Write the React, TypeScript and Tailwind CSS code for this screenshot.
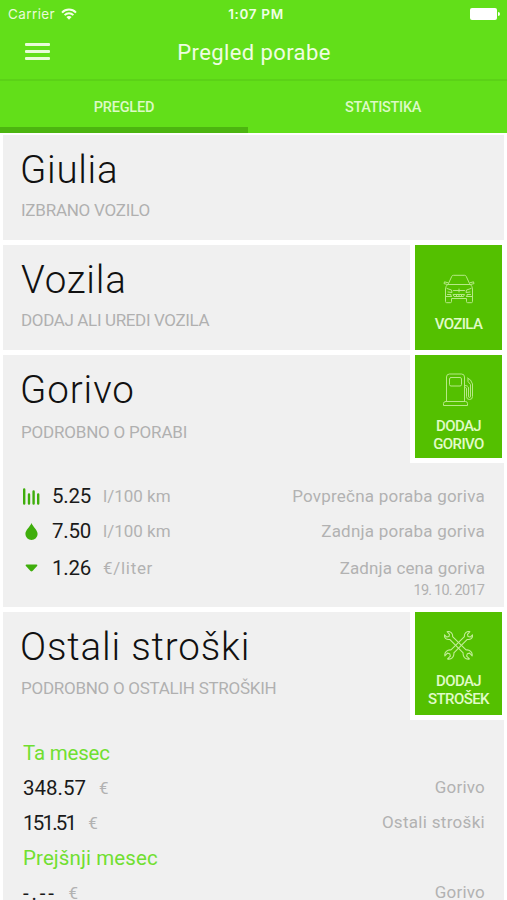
import type { ReactNode } from "react";

function StatusBar() {
  return (
    <div className="flex h-7 items-center pl-[8px] pr-[7px] font-['Inter',sans-serif] text-[13.5px] text-[#e9fbd9]">
      <div className="flex flex-1 items-center gap-[6px]">
        <span className="tracking-[0.4px]">Carrier</span>
        <svg width="16" height="12" viewBox="0 0 16 12" fill="none" stroke="#f4ffe8" strokeWidth="2">
          <path d="M1 4.6C5 .6 11 .6 15 4.6" />
          <path d="M3.6 7.1c2.5-2.4 6.3-2.4 8.8 0" />
          <path d="M8 11.7 5.4 9.1c1.5-1.4 3.7-1.4 5.2 0z" fill="#f4ffe8" stroke="none" />
        </svg>
      </div>
      <span className="pl-1 font-semibold tracking-[0.65px] text-[#f0ffe4]">1:07 PM</span>
      <div className="flex flex-1 items-center justify-end gap-px">
        <div className="h-[12px] w-[27px] rounded-[2px] bg-white" />
        <div className="h-1 w-[2px] rounded-r-full bg-white" />
      </div>
    </div>
  );
}

function NavBar() {
  return (
    <div className="grid h-[51px] grid-cols-[1fr_auto_1fr] items-center pl-[25px]">
      <button className="flex w-[25px] flex-col gap-[4px] pb-[5px]" aria-label="Menu">
        <span className="h-[3px] w-full rounded-[1px] bg-[#e8fcd8]" />
        <span className="h-[3px] w-full rounded-[1px] bg-[#e8fcd8]" />
        <span className="h-[3px] w-full rounded-[1px] bg-[#e8fcd8]" />
      </button>
      <h1 className="-translate-x-3 pb-[2px] text-[22px] leading-7 font-normal tracking-[0.4px] text-[#effde2]">Pregled porabe</h1>
    </div>
  );
}

function Tabs() {
  return (
    <div className="flex h-[54px] border-t-2 border-[#5bd217] text-[14.5px] font-medium text-[#dcfac6]">
      <div className="flex w-[248px] items-center justify-center border-b-[6px] border-[#4cb510] pt-[7px] tracking-[-0.2px]">PREGLED</div>
      <div className="flex flex-1 items-center justify-center pt-[1px] pl-[11px] tracking-[-0.3px]">STATISTIKA</div>
    </div>
  );
}

function Heading({ title, sub, titleClass, subClass }: { title: string; sub: string; titleClass: string; subClass: string }) {
  return (
    <div className="pt-3">
      <h2 className={`text-[38.5px] leading-[44px] font-light text-[#111] ${titleClass}`}>{title}</h2>
      <p className={`text-[17px] leading-6 text-[#b0b0b0] ${subClass}`}>{sub}</p>
    </div>
  );
}

function ActionButton({ icon, children, className }: { icon: ReactNode; children: ReactNode; className: string }) {
  return (
    <div className="shrink-0 bg-white pr-[2px] pb-[5px] pl-[5px]">
      <button className={`flex w-[87px] flex-col items-center bg-[#54c000] text-[15px] leading-[17.5px] font-medium text-[#e0fbc8] ${className}`}>
        {icon}
        {children}
      </button>
    </div>
  );
}

function CarIcon() {
  return (
    <svg className="mb-[12px] shrink-0" width="32" height="30" viewBox="0 0 32 30" fill="none" stroke="#b6e986" strokeWidth="1" strokeLinejoin="round" strokeLinecap="round">
      <path d="M5.5 9.5 8.800 2.300Q9.200 1.300 10.400 1.300H21.600Q22.800 1.300 23.200 2.300L26.500 9.500" />
      <path d="M4.500 10.500H27.500M4.500 10.500Q2.500 12.500 2.500 15V22.500H8.500M23.500 22.500H29.500V15Q29.500 12.500 27.500 10.500" />
      <path d="M5 8.800 1.500 7.800 1 9.600 4 10.400M27 8.800 30.500 7.800 31 9.600 28 10.400" />
      <path d="M2.500 22.500V27.500Q2.500 28.700 3.600 28.700H7.400Q8.500 28.700 8.500 27.500V24.500H23.500V27.500Q23.500 28.700 24.600 28.700H28.400Q29.500 28.700 29.500 27.500V22.500" />
      <path d="M4 14.500 8.500 16 9 18.500 5 18M28 14.500 23.500 16 23 18.500 27 18" />
      <path d="M10.500 16.500H21.500M16 15V18M10.500 20.500H21.500L20.500 22.500H11.500Z" />
      <path d="M4.500 20.500H8V22.500M27.500 20.500H24V22.500M13.500 20.500V22.500M16 20.500V22.500M18.500 20.500V22.500" />
    </svg>
  );
}

function PumpIcon() {
  return (
    <svg className="mb-[11px] shrink-0" width="31" height="34" viewBox="0 0 31 34" fill="none" stroke="#b6e986" strokeWidth="1" strokeLinejoin="round" strokeLinecap="round">
      <path d="M3.500 28V4Q3.500 1 6.500 1H18.500Q21.500 1 21.500 4V28" />
      <path d="M2.500 28.500H22.500Q24.500 28.500 24.500 30.500V32.500H.500V30.500Q.500 28.500 2.500 28.500Z" />
      <rect x="6.500" y="4.500" width="12" height="8.500" rx="1.500" />
      <path d="M21.500 14.500H22.500Q23.500 14.500 23.500 16V23.500Q23.500 26.500 26.500 26.500T29.500 23.500V11L27.500 7 24.500 5" />
      <path d="M25 6V8.500L27.500 11.500V23Q27.500 24.500 26.500 24.500T25.500 23V15Q25.500 12.500 21.500 12.500" />
    </svg>
  );
}

function WrenchShape() {
  return (
    <path d="M5.900 8.700 19.800 22.600Q19.400 25.600 21.200 27.500 23.400 29.600 26.300 28.900L23.400 26 24.100 23.500 26.500 22.900 29.100 25.700Q29.700 23 27.600 21 25.600 19.200 22.800 19.600L8.900 5.700Q9.200 3.300 7.500 1.700 5.600 0 3.200.700L5.700 3.400 5.100 5.700 2.900 6.300.500 3.900Q.100 6.300 1.900 7.900 3.600 9.300 5.900 8.700Z" />
  );
}

function ToolsIcon() {
  return (
    <svg className="mb-[13px] shrink-0" width="29" height="29" viewBox="0 0 30 30" fill="none" stroke="#c3ee98" strokeWidth="1.1" strokeLinejoin="round">
      <WrenchShape />
      <g transform="matrix(-1 0 0 1 30 0)">
        <WrenchShape />
      </g>
    </svg>
  );
}

function BarsIcon() {
  return (
    <svg className="-ml-px" width="18" height="18" viewBox="0 0 18 18" fill="none" stroke="#3fae0c" strokeWidth="2.4" strokeLinecap="round">
      <path d="M2.200 1.500V15.500M7 6.500V15.500M11.600 3.500V15.500M16.200 6.500V15.500" />
    </svg>
  );
}

function DropIcon() {
  return (
    <svg className="-ml-px" width="18" height="18" viewBox="0 0 18 18" fill="#3fae0c">
      <path d="M9.500 0C11 4 15.600 7 15.600 11A6.100 6 0 0 1 3.400 11C3.400 7 8 4 9.500 0Z" />
    </svg>
  );
}

function CaretIcon() {
  return (
    <svg className="-ml-px" width="18" height="18" viewBox="0 0 18 18" fill="#3fae0c">
      <path d="M4.500 4.500H14.500Q16.100 4.700 15.100 6L10.500 11Q9.500 11.900 8.500 11L3.900 6Q2.900 4.700 4.500 4.500Z" />
    </svg>
  );
}

function Stat({ icon, value, unit, unitClass = "", label, labelClass, className }: { icon: ReactNode; value: string; unit: string; unitClass?: string; label: string; labelClass: string; className: string }) {
  return (
    <div className={`flex items-center pr-[19px] pl-5 text-[17px] text-[#b2b2b2] ${className}`}>
      {icon}
      <span className="ml-[12px] w-[51px] text-[20.5px] tracking-[-0.2px] text-[#1a1a1a]">{value}</span>
      <span className={unitClass}>{unit}</span>
      <span className={`ml-auto ${labelClass}`}>{label}</span>
    </div>
  );
}

function CostRow({ value, label, labelClass = "", valueClass = "" }: { value: string; label: string; labelClass?: string; valueClass?: string }) {
  return (
    <div className="flex h-[35px] items-center pt-px pr-[19px] pl-5 text-[17px] text-[#b2b2b2]">
      <span className={`text-[20.5px] text-[#1a1a1a] ${valueClass}`}>{value}</span>
      <span className="ml-[13px] pt-px">€</span>
      <span className={`ml-auto ${labelClass}`}>{label}</span>
    </div>
  );
}

export default function App() {
  return (
    <div className="h-[900px] w-[507px] overflow-hidden bg-white font-['Roboto',sans-serif]">
      <header className="h-[133px] bg-[#62df19]">
        <StatusBar />
        <NavBar />
        <Tabs />
      </header>
      <main className="mt-[2px] flex flex-col gap-[5px] px-[3px]">
        <section className="h-[105px] bg-[#f0f0f0] pl-[18px]">
          <Heading title="Giulia" sub="IZBRANO VOZILO" titleClass="-ml-px pt-px tracking-[0.7px]" subClass="mt-[6px] tracking-[-0.25px]" />
        </section>

        <section className="flex h-[105px] justify-between bg-[#f0f0f0] pl-[18px]">
          <Heading title="Vozila" sub="DODAJ ALI UREDI VOZILA" titleClass="pt-px tracking-[0.8px]" subClass="mt-[6px] tracking-[-0.36px]" />
          <ActionButton icon={<CarIcon />} className="h-[105px] pt-[29px] tracking-[-0.6px]">
            <span>VOZILA</span>
          </ActionButton>
        </section>

        <section className="h-[252px] bg-[#f0f0f0]">
          <div className="flex h-[124px] items-start justify-between pl-[18px]">
            <Heading title="Gorivo" sub="PODROBNO O PORABI" titleClass="-ml-px pt-px tracking-[0.9px]" subClass="mt-[8px] tracking-[-0.2px]" />
            <ActionButton icon={<PumpIcon />} className="h-[103px] pt-[18px] tracking-[-0.6px]">
              <span>DODAJ</span>
              <span>GORIVO</span>
            </ActionButton>
          </div>
          <Stat icon={<BarsIcon />} value="5.25" unit="l/100 km" label="Povprečna poraba goriva" labelClass="tracking-[0.22px]" className="h-[35px]" />
          <Stat icon={<DropIcon />} value="7.50" unit="l/100 km" label="Zadnja poraba goriva" labelClass="tracking-[0.22px]" className="h-[35px]" />
          <Stat icon={<CaretIcon />} value="1.26" unit="€/liter" unitClass="tracking-[0.7px]" label="Zadnja cena goriva" labelClass="tracking-[0.12px]" className="h-[39px]" />
          <p className="-mt-[7px] pr-5 text-right text-[14.5px] leading-5 tracking-[-0.8px] text-[#b2b2b2]">19. 10. 2017</p>
        </section>

        <section className="h-[320px] bg-[#f0f0f0]">
          <div className="flex h-[123px] items-start justify-between pl-[18px]">
            <Heading title="Ostali stroški" sub="PODROBNO O OSTALIH STROŠKIH" titleClass="-ml-px pt-px tracking-[0.85px]" subClass="mt-[7px] tracking-[-0.27px]" />
            <ActionButton icon={<ToolsIcon />} className="h-[103px] pt-[19px] tracking-[-0.6px]">
              <span>DODAJ</span>
              <span>STROŠEK</span>
            </ActionButton>
          </div>
          <h3 className="h-[35px] pt-px pl-5 text-[20.5px] leading-[35px] tracking-[-0.2px] text-[#70df31]">Ta mesec</h3>
          <CostRow value="348.57" label="Gorivo" labelClass="tracking-[0.2px]" />
          <CostRow value="151.51" label="Ostali stroški" valueClass="tracking-[-1.8px]" labelClass="tracking-[0.3px]" />
          <h3 className="h-[35px] pt-px pl-5 text-[20.5px] leading-[35px] tracking-[0.1px] text-[#70df31]">Prejšnji mesec</h3>
          <CostRow value="-.--" label="Gorivo" valueClass="tracking-[2.8px] -mr-[1px]" labelClass="tracking-[0.2px]" />
        </section>
      </main>
    </div>
  );
}
